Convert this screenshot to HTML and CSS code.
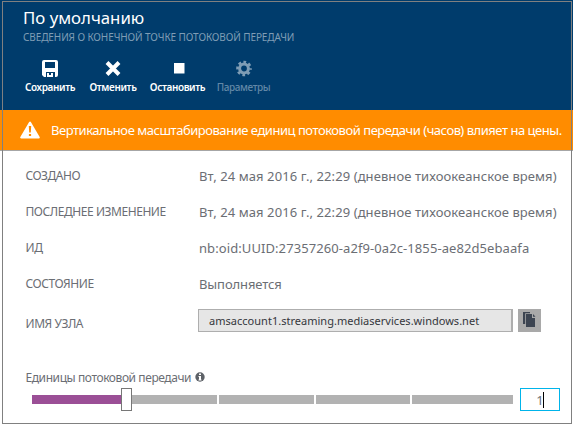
FILE: index.html
```html
<!DOCTYPE html>
<html lang="ru">
<head>
<meta charset="utf-8">
<title>По умолчанию</title>
<link rel="stylesheet" href="styles.css">
</head>
<body>
<main class="blade">
  <header class="header">
    <h1 class="title"><span>По умолчанию</span></h1>
    <p class="subtitle"><span>СВЕДЕНИЯ О КОНЕЧНОЙ ТОЧКЕ ПОТОКОВОЙ ПЕРЕДАЧИ</span></p>
    <nav class="toolbar">
      <button class="tool save">
        <svg width="16" height="17" viewBox="0 0 16 17"><path fill="#fff" fill-rule="evenodd" d="M2 0h12q2 0 2 2v13q0 2-2 2h-1v-5H4v5H2L0 15V2q0-2 2-2zM3 2v6h10V2zM5 13h2v2h2v-2h2v4H5z"/></svg>
        <span>Сохранить</span>
      </button>
      <button class="tool cancel">
        <svg width="16" height="17" viewBox="0 0 16 17"><path stroke="#fff" stroke-width="4" d="M2 2.500l12 12M14 2.500l-12 12"/></svg>
        <span>Отменить</span>
      </button>
      <button class="tool stop">
        <svg width="16" height="17" viewBox="0 0 16 17"><path fill="#fff" d="M4 3h10.500v10.500H4z"/></svg>
        <span>Остановить</span>
      </button>
      <button class="tool settings" disabled>
        <svg width="16" height="17" viewBox="0 0 16 17"><g fill="none" stroke="#7f9db5"><circle cx="8" cy="8.500" r="4.400" stroke-width="3"/><circle cx="8" cy="8.500" r="6.500" stroke-width="2.600" stroke-dasharray="2.700 2.405" stroke-dashoffset="1.350"/></g></svg>
        <span>Параметры</span>
      </button>
    </nav>
  </header>
  <section class="alert">
    <svg width="20" height="18" viewBox="0 0 20 18"><path fill="#fff" stroke="#fff" stroke-width="2" stroke-linejoin="round" d="M10 1.500L1.200 16.500h17.600z"/><path fill="#ff8c00" d="M8.800 5h2.400l-.4 6.500H9.200zM8.900 13h2.200v2H8.900z"/></svg>
    <span>Вертикальное масштабирование единиц потоковой передачи (часов) влияет на цены.</span>
  </section>
  <dl class="props">
    <dt><span>СОЗДАНО</span></dt><dd><span>Вт, 24 мая 2016 г., 22:29 (дневное тихоокеанское время)</span></dd>
    <dt><span>ПОСЛЕДНЕЕ ИЗМЕНЕНИЕ</span></dt><dd><span>Вт, 24 мая 2016 г., 22:29 (дневное тихоокеанское время)</span></dd>
    <dt><span>ИД</span></dt><dd><span>nb:oid:UUID:27357260-a2f9-0a2c-1855-ae82d5ebaafa</span></dd>
    <dt><span>СОСТОЯНИЕ</span></dt><dd class="state"><span>Выполняется</span></dd>
  </dl>
  <div class="host">
    <span class="host-label">ИМЯ УЗЛА</span>
    <div class="host-name"><span>amsaccount1.streaming.mediaservices.windows.net</span></div>
    <button class="copy" aria-label="Копировать">
      <svg width="23" height="23" viewBox="0 0 23 23"><path fill="#3c4451" d="M5 3h7v1.200H7.200V15H5zM8 5h6v4h3v9H8zM15 5l2.500 2.800H15z"/></svg>
    </button>
  </div>
  <div class="units-label"><span>Единицы потоковой передачи</span>
    <svg width="10" height="10" viewBox="0 0 10 10"><circle cx="5" cy="5" r="4.700" fill="#5d6167"/><path fill="#fff" d="M4 1.500h2V3H4zM3.500 4H6v3.500h.500v1h-3v-1H4V5h-.500z"/></svg>
  </div>
  <div class="units">
    <div class="slider"><i class="fill"></i><i class="thumb"></i><i></i><i></i><i></i><i></i></div>
    <div class="count"><span>1</span><i class="caret"></i></div>
  </div>
</main>
</body>
</html>
```
FILE: styles.css
```css
* { box-sizing: border-box; margin: 0; padding: 0; }
body {
  width: 573px;
  height: 425px;
  overflow: hidden;
  background: #fff;
  font-family: "Noto Sans", "Open Sans", sans-serif;
  color: #6b6e74;
}
svg { display: block; flex: none; }
button { border: 0; background: none; font: inherit; color: inherit; }
.blade { position: relative; height: 425px; white-space: nowrap; }
.blade::after {
  content: "";
  position: absolute;
  inset: 1px 1px 1px 2px;
  border: 1px solid #808080;
  pointer-events: none;
}
.header { height: 110px; padding: 7px 0 0 23px; background: #003c6c; color: #fff; }
.title { height: 22px; font-size: 16.8px; line-height: 22px; font-weight: 400; }
.subtitle { height: 15px; font-size: 10px; line-height: 16px; letter-spacing: -.1px; color: #7f9db5; }
.toolbar { display: flex; margin-top: 16px; padding-left: 1px; }
.tool {
  display: flex;
  flex-direction: column;
  align-items: center;
  gap: 3px;
  font-size: 10px;
  line-height: 14px;
  font-weight: 600;
  letter-spacing: -.38px;
}
.save { width: 52px; }
.cancel { width: 46px; margin-left: 14px; }
.stop { width: 55px; margin-left: 14px; }
.settings { width: 55px; margin-left: 11px; color: #6288a7; font-weight: 500; }
.alert {
  display: flex;
  align-items: center;
  gap: 11px;
  height: 41px;
  padding-left: 20px;
  background: #ff8c00;
  border-bottom: 1px solid #a6a6a6;
  color: #fff;
  font-size: 13px;
  letter-spacing: -.47px;
}
.props {
  display: grid;
  grid-template-columns: 173px 1fr;
  grid-auto-rows: 36px;
  align-items: center;
  padding: 7px 0 0 26px;
}
dt, .host-label { margin-left: -.5px; font-size: 12px; line-height: 18px; letter-spacing: -.44px; }
dd { font-size: 13px; line-height: 20px; letter-spacing: .085px; }
.state { letter-spacing: -.1px; }
.host { display: flex; align-items: center; height: 23px; margin-top: 7px; padding-left: 26px; }
.host-label { width: 172.5px; padding-top: 6px; }
.host-name {
  width: 315px;
  height: 23px;
  padding-left: 10px;
  border: 1px solid #aeaeae;
  border-right-width: 2px;
  background: #e6e6e6;
  color: #35373c;
  font-size: 11px;
  line-height: 22px;
  letter-spacing: .02px;
}
.copy { width: 23px; height: 23px; margin-left: 5px; background: #a9a9a9; }
.units-label { display: flex; align-items: center; gap: 4px; height: 18px; margin-top: 36px; padding-left: 25.5px; font-size: 12px; letter-spacing: -.42px; }
.units-label svg { margin-top: -1px; }
.units { display: flex; align-items: center; height: 23px; margin-top: 2px; padding-left: 32px; }
.slider { display: grid; grid-template-columns: 89px 11px 85px 97px 96px 103px; align-items: center; width: 481px; }
.slider i { height: 9px; background: #b2b2b2; }
.slider i:nth-child(n+4) { margin-left: 2px; }
.slider .fill { background: #9b4f96; }
.slider .thumb { height: 23px; border: 1px solid #777; background: #fff; }
.count {
  display: flex;
  align-items: center;
  justify-content: center;
  width: 40px;
  height: 23px;
  margin-left: 7px;
  border: 1px solid #00b4ea;
  font-size: 13px;
}
.caret { width: 1px; height: 16px; margin-left: -1px; background: #000; }
```
